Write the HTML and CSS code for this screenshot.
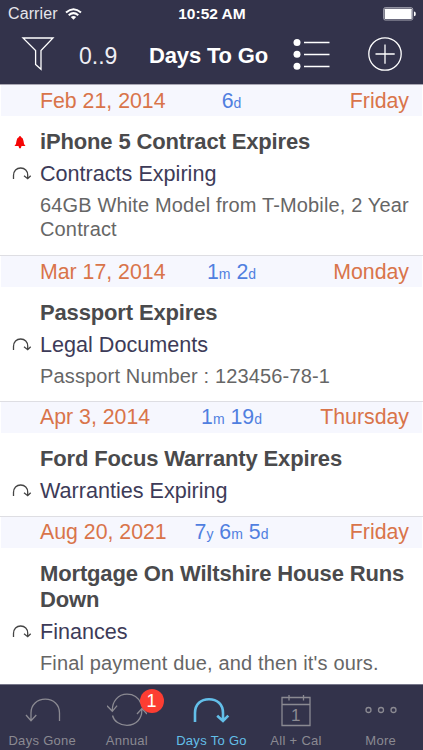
FILE: index.html
```html
<!DOCTYPE html>
<html lang="en">
<head>
  <meta charset="UTF-8" />
  <meta name="viewport" content="width=device-width, initial-scale=1.0" />
  <title>Days To Go</title>
  <link rel="stylesheet" href="styles.css">
</head>
<body>
  <svg class="defs" width="0" height="0">
    <symbol id="arc" viewBox="0 0 20 16">
      <path d="M1.500 13V9.500C1.500 5 4.500 2 8.700 2S15.700 5 15.700 9v3.500M12 9.700l3.700 3 3-3" />
    </symbol>
  </svg>

  <header>
    <div class="status-bar">
      <div class="carrier">
        <span>Carrier</span>
        <svg width="17" height="12" viewBox="0 0 17 12" fill="none" stroke="#fff" stroke-width="2">
          <path d="M1 4.500Q8.500-2 16 4.500M3.700 7.200q4.800-4.100 9.600 0" />
          <path d="M5.800 9q2.700-2.200 5.400 0l-2.700 2.700z" fill="#fff" stroke="none" />
        </svg>
      </div>
      <div class="clock">10:52 AM</div>
      <div class="battery">
        <svg width="33" height="14" viewBox="0 0 33 14">
          <rect x=".7" y=".7" width="29" height="12.300" rx="1.500" fill="none" stroke="#a9a9b5" />
          <rect x="1.700" y="1.700" width="27" height="10.300" rx=".5" fill="#fff" />
          <path d="M31 4.500q1.800 0 1.800 2.400T31 9.300z" fill="#fff" />
        </svg>
      </div>
    </div>
    <div class="nav-bar">
      <svg class="filter" width="34" height="36" viewBox="0 0 34 36">
        <path d="M2 2H32L20 14.500V33.300L14.600 28.500V14.500Z" />
      </svg>
      <span class="sort">0..9</span>
      <h1>Days To Go</h1>
      <svg class="list" width="38" height="34" viewBox="0 0 38 34">
        <g fill="#fff" stroke="none">
          <circle cx="4" cy="5.500" r="3.500" />
          <circle cx="4" cy="17.300" r="3.500" />
          <circle cx="4" cy="29.200" r="3.500" />
        </g>
        <path d="M11 5.500H36.500M11 17.500H36.500M11 29.500H36.500" />
      </svg>
      <svg class="add" width="36" height="36" viewBox="0 0 36 36">
        <circle cx="18" cy="18" r="16.200" />
        <path d="M18 8.500V27.700M8.500 18H27.700" />
      </svg>
    </div>
  </header>

  <main>
    <section class="event">
      <div class="date-row">
        <span class="date">Feb 21, 2014</span>
        <span class="left">6<small>d</small></span>
        <span class="day">Friday</span>
      </div>
      <div class="row title-row">
        <svg class="bell" width="12" height="13" viewBox="0 0 12 13">
          <path d="M6 0q.9 0 1 1Q9.300 2 9.500 5q.1 3.500 2 5H.5q1.900-1.500 2-5Q2.700 2 5 1 5.100 0 6 0zM4.500 10h3Q7 12.500 6 12.500T4.500 10z" />
        </svg>
        <h2>iPhone 5 Contract Expires</h2>
      </div>
      <div class="row category">
        <svg class="arc" width="20" height="16"><use href="#arc" /></svg>
        <span>Contracts Expiring</span>
      </div>
      <p>64GB White Model from T-Mobile, 2 Year Contract</p>
    </section>

    <section class="event">
      <div class="date-row">
        <span class="date">Mar 17, 2014</span>
        <span class="left">1<small>m</small> 2<small>d</small></span>
        <span class="day">Monday</span>
      </div>
      <div class="row title-row"><h2>Passport Expires</h2></div>
      <div class="row category">
        <svg class="arc" width="20" height="16"><use href="#arc" /></svg>
        <span>Legal Documents</span>
      </div>
      <p>Passport Number : 123456-78-1</p>
    </section>

    <section class="event">
      <div class="date-row">
        <span class="date">Apr 3, 2014</span>
        <span class="left">1<small>m</small> 19<small>d</small></span>
        <span class="day">Thursday</span>
      </div>
      <div class="row title-row"><h2>Ford Focus Warranty Expires</h2></div>
      <div class="row category">
        <svg class="arc" width="20" height="16"><use href="#arc" /></svg>
        <span>Warranties Expiring</span>
      </div>
    </section>

    <section class="event">
      <div class="date-row">
        <span class="date">Aug 20, 2021</span>
        <span class="left">7<small>y</small> 6<small>m</small> 5<small>d</small></span>
        <span class="day">Friday</span>
      </div>
      <div class="row title-row"><h2>Mortgage On Wiltshire House Runs Down</h2></div>
      <div class="row category">
        <svg class="arc" width="20" height="16"><use href="#arc" /></svg>
        <span>Finances</span>
      </div>
      <p>Final payment due, and then it's ours.</p>
    </section>
  </main>

  <nav class="tab-bar">
    <div class="tab">
      <svg width="40" height="40" viewBox="0 0 40 40">
        <path d="M37.500 30V22C37.500 13.500 31.500 8.200 23.300 8.200S9 13.500 9 22V29.500M4 24L9 29.700 14.300 24" />
      </svg>
      <span>Days Gone</span>
    </div>
    <div class="tab">
      <svg width="40" height="40" viewBox="0 0 40 40">
        <path d="M5.300 20C5 10 11.500 3.200 20 3.200c6.500 0 11.500 3.500 14 9.300M0 14.800l5.300 5.500 4.800-5.700M34.700 18.500C35.500 27.500 29 34.300 20 34.300 12.500 34.300 7 30.300 5.500 24.500M30 23l5-5.500 5 5.500" />
      </svg>
      <b class="badge">1</b>
      <span>Annual</span>
    </div>
    <div class="tab active">
      <svg width="40" height="40" viewBox="0 0 40 40">
        <path d="M4 31V22C4 13 10 8.200 18 8.200S32 13 32 22V29M26.200 24.700l5.800 5.300 5.300-5.300" />
      </svg>
      <span>Days To Go</span>
    </div>
    <div class="tab">
      <svg width="40" height="40" viewBox="0 0 40 40">
        <path d="M6 6.500H34V34.500H6ZM6 13.500H34M13 4V9.500M27.500 4V9.500" />
        <text x="20" y="29.500" text-anchor="middle">1</text>
      </svg>
      <span>All + Cal</span>
    </div>
    <div class="tab">
      <svg width="40" height="40" viewBox="0 0 40 40">
        <circle cx="7.500" cy="19" r="2.500" />
        <circle cx="20" cy="19" r="2.500" />
        <circle cx="32.500" cy="19" r="2.500" />
      </svg>
      <span>More</span>
    </div>
  </nav>
</body>
</html>
```
FILE: styles.css
```css
* {
  box-sizing: border-box;
}
body {
  margin: 0;
  width: 423px;
  height: 750px;
  display: flex;
  flex-direction: column;
  overflow: hidden;
  font-family: "Liberation Sans", Arial, sans-serif;
  background: #fff;
}
svg {
  display: block;
  flex: none;
}
.defs {
  display: none;
}
h1, h2, p {
  margin: 0;
}
header {
  height: 85px;
  flex: none;
  background: #33334b;
  color: #fff;
  border-bottom: 1px solid #aaa8b4;
}

/* status bar */
.status-bar {
  height: 27px;
  padding: 0 7px 0 8px;
  display: grid;
  grid-template-columns: 1fr auto 1fr;
  align-items: center;
  font-size: 16px;
}
.carrier {
  display: flex;
  align-items: center;
  gap: 7px;
  color: #e6e6ec;
  letter-spacing: 0.1px;
}
.clock {
  font-weight: bold;
  font-size: 15.5px;
}
.battery {
  justify-self: end;
}

/* navigation bar */
.nav-bar {
  height: 57px;
  padding-left: 21px;
  display: flex;
  align-items: center;
}
.nav-bar svg {
  margin-bottom: 4px;
  fill: none;
  stroke: #fff;
  stroke-width: 1.3;
}
.sort {
  width: 70px;
  margin: 1px 0 0 24px;
  font-size: 23px;
  color: #eeeef4;
}
h1 {
  width: 144px;
  margin-top: 1px;
  font-size: 22px;
  letter-spacing: -0.15px;
  white-space: nowrap;
}
.nav-bar .add {
  margin-left: 36px;
}

/* events */
main {
  flex: 1;
  min-height: 0;
}
.event {
  padding-bottom: 12px;
  border-top: 1px solid #dedee3;
}
.event:first-child {
  border-top: 0;
  padding-bottom: 14px;
}
.date-row {
  height: 31px;
  margin: 0 1px 13px;
  padding: 1px 13px 0 39px;
  display: grid;
  grid-template-columns: 134px 1fr 120px;
  align-items: center;
  background: #f6f7fe;
  color: #d9744a;
  font-size: 21.3px;
  white-space: nowrap;
}
.left {
  color: #507fe0;
  text-align: center;
}
.left small {
  font-size: 14px;
}
.day {
  text-align: right;
}
.row {
  display: grid;
  grid-template-columns: 28px 1fr;
  padding-left: 12px;
  align-items: center;
}
.row h2, .row span {
  grid-column: 2;
}
h2 {
  font-size: 22px;
  line-height: 26px;
  letter-spacing: -0.15px;
  color: #4a4a4c;
}
.bell {
  margin-left: 2px;
  fill: #f50505;
}
.category {
  height: 26px;
  margin-top: 6px;
  font-size: 21.6px;
  color: #3d3b58;
}
.arc {
  fill: none;
  stroke: #444;
  stroke-width: 1.3;
}
p {
  margin-top: 7px;
  padding: 0 10px 0 40px;
  font-size: 20px;
  line-height: 23.5px;
  letter-spacing: 0.15px;
  color: #666;
}

/* tab bar */
.tab-bar {
  height: 66px;
  flex: none;
  display: grid;
  grid-template-columns: repeat(5, 1fr);
  background: #33334b;
  border-top: 1px solid #77778a;
}
.tab {
  position: relative;
  display: flex;
  flex-direction: column;
  align-items: center;
  padding-top: 6px;
  font-size: 13px;
  letter-spacing: 0.3px;
  color: #8b8a92;
}
.tab svg {
  fill: none;
  stroke: #8b8a92;
  stroke-width: 1.3;
}
.tab svg text {
  font-size: 17px;
  fill: #8b8a92;
  stroke: none;
}
.tab span {
  line-height: 16px;
  margin-top: 2px;
}
.tab.active {
  color: #63bfe9;
}
.tab.active svg {
  stroke: #63bfe9;
  stroke-width: 2.6;
}
.badge {
  position: absolute;
  top: 4px;
  left: 55px;
  width: 24px;
  height: 24px;
  border-radius: 50%;
  background: #fc3d32;
  color: #fff;
  font-size: 18px;
  font-weight: normal;
  line-height: 24px;
  letter-spacing: 0;
  text-align: center;
}
```
